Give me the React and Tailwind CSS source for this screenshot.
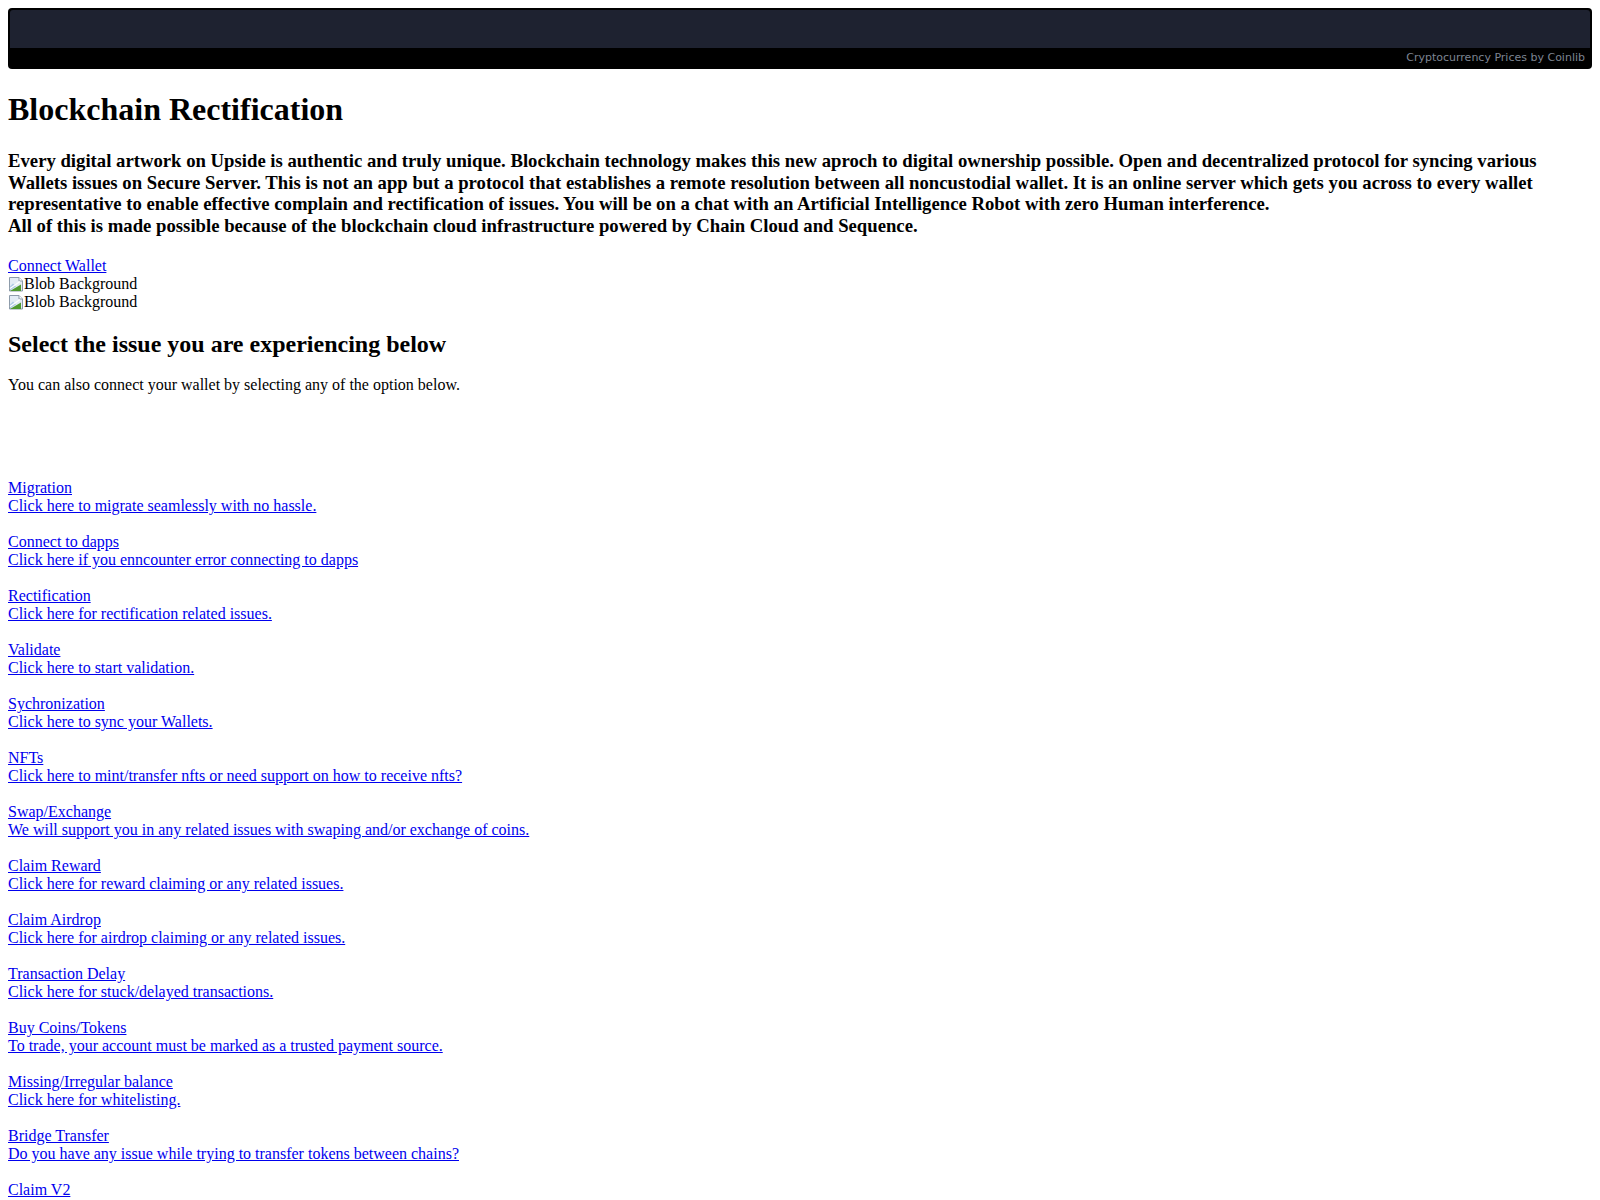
import React from 'react';

const issues = [
    ['Migration', 'Click here to migrate seamlessly with no hassle.'],
    ['Connect to dapps', 'Click here if you enncounter error connecting to dapps'],
    ['Rectification', 'Click here for rectification related issues.'],
    ['Validate', 'Click here to start validation.'],
    ['Sychronization', 'Click here to sync your Wallets.'],
    ['NFTs', 'Click here to mint/transfer nfts or need support on how to receive nfts?'],
    ['Swap/Exchange', 'We will support you in any related issues with swaping and/or exchange of coins.'],
    ['Claim Reward', 'Click here for reward claiming or any related issues.'],
    ['Claim Airdrop', 'Click here for airdrop claiming or any related issues.'],
    ['Transaction Delay', 'Click here for stuck/delayed transactions.'],
    ['Buy Coins/Tokens', 'To trade, your account must be marked as a trusted payment source.'],
    ['Missing/Irregular balance', 'Click here for whitelisting.'],
    ['Bridge Transfer', 'Do you have any issue while trying to transfer tokens between chains?'],
    ['Claim V2', 'Click here for V2 claiming or any related issues.'],
];

// broken image placeholder, like the browser draws for a missing <img>
function BrokenImage() {
    return (
        <svg width="16" height="16" viewBox="0 0 16 16" className="inline-block align-[-3px]">
            <path d="M1.5 1.5h9.5l3.5 3.5v10h-13z" fill="#e3ecf5" stroke="#8d9baa" />
            <path d="M11 1.5v3.5h3.5" fill="#ffffff" stroke="#8d9baa" />
            <path d="M2 14.5v-4l3-3 3 3-6 4z" fill="#7aa8d6" opacity="0.5" />
            <path d="M2 15l11-6.5v6.5z" fill="#4f9a2e" />
            <path d="M2 12.5l10-7" stroke="#ffffff" strokeWidth="1.2" />
        </svg>
    );
}

function CoinlibWidget() {
    return (
        <div className="flex h-[61px] flex-col rounded-[4px] bg-black px-[2px] pt-[2px]">
            <div className="h-[38px] rounded-t-[3px] bg-[#1e2230]" />
            <div className="flex-1 pr-[5px] text-right font-['DejaVu_Sans',sans-serif] text-[11px] leading-[20px] text-[#7d8492]">
                Cryptocurrency Prices by Coinlib
            </div>
        </div>
    );
}

export default function App() {
    return (
        <div className="bg-white">
            <div className="p-2 font-['Liberation_Serif',serif] text-base leading-[18px] text-black">
                <CoinlibWidget />

                <h1 className="mt-[22px] mb-[22px] text-[32px] leading-[37px] font-bold">
                    Blockchain Rectification
                </h1>

                <h3 className="text-[18.72px] leading-[21.7px] font-bold">
                    Every digital artwork on Upside is authentic and truly unique. Blockchain technology makes this new aproch to digital ownership possible. Open and decentralized protocol for syncing various Wallets issues on Secure Server. This is not an app but a protocol that establishes a remote resolution between all noncustodial wallet. It is an online server which gets you across to every wallet representative to enable effective complain and rectification of issues. You will be on a chat with an Artificial Intelligence Robot with zero Human interference.
                    <br />
                    All of this is made possible because of the blockchain cloud infrastructure powered by Chain Cloud and Sequence.
                </h3>

                <div className="mt-[20px]">
                    <a href="#" className="text-[#0000ee] underline">Connect Wallet</a>
                </div>
                <div><BrokenImage />Blob Background</div>
                <div><BrokenImage />Blob Background</div>

                <h2 className="mt-[19px] text-[24px] leading-[28px] font-bold">
                    Select the issue you are experiencing below
                </h2>
                <p className="mt-[18px]">You can also connect your wallet by selecting any of the option below.</p>

                <div className="mt-[85px] flex flex-col gap-[18px]">
                    {issues.map(([title, text]) => (
                        <div key={title}>
                            <a href="#" className="text-[#0000ee] underline">{title}</a>
                            <br />
                            <a href="#" className="text-[#0000ee] underline">{text}</a>
                        </div>
                    ))}
                </div>
            </div>
        </div>
    );
}
